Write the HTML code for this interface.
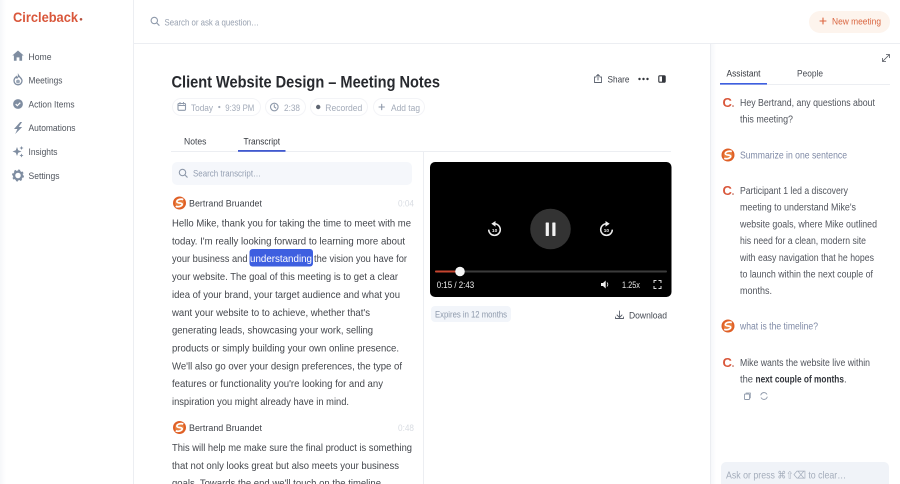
<!DOCTYPE html>
<html lang="en"><head><meta charset="utf-8"><title>Client Website Design – Meeting Notes</title>
<style>
html,body{margin:0;padding:0;width:900px;height:484px;overflow:hidden;background:#fff}
svg{display:block}
text{font-family:"Liberation Sans","DejaVu Sans",sans-serif;font-size:10px;fill:#444952}
.nav{font-size:9.3px;fill:#50555e}
.t{font-size:10.5px;fill:#43464c}
.c{font-size:9.8px;fill:#50545c}
.m{font-size:9.2px;fill:#a3abb9}
.ic{fill:none;stroke:#8f9aab;stroke-width:1.1;stroke-linecap:round;stroke-linejoin:round}
.chip{fill:#fff;stroke:#f3f4f7}
</style></head><body>
<svg width="900" height="484" viewBox="0 0 900 484" xmlns="http://www.w3.org/2000/svg">
<defs>
<linearGradient id="sh" x1="0" x2="1"><stop offset="0" stop-color="#f6f7fa"/><stop offset="1" stop-color="#fff"/></linearGradient>
<g id="av"><circle r="6.5" fill="#df5f26"/><circle r="4.6" fill="#e9803f"/><path d="M3.8-3.4C1.5-4.6-2.8-3.4-2.6-1.2-2.4.6 2.6-.6 2.7 1.2 2.8 3.2-1.6 4.4-3.8 3.2" fill="none" stroke="#fff" stroke-width="1.7"/></g>
</defs>
<rect width="6" height="484" fill="url(#sh)"/>
<rect x="711" y="44" width="5" height="440" fill="url(#sh)"/>
<rect x="133" y="0" width="1" height="484" fill="#eceef2"/>
<rect x="134" y="43" width="766" height="1" fill="#eceef2"/>
<rect x="710" y="44" width="1" height="440" fill="#eceef2"/>
<rect x="423" y="152" width="1" height="332" fill="#eceef2"/>

<!-- Sidebar -->
<text x="13" y="22" textLength="65" lengthAdjust="spacingAndGlyphs" style="font-size:13.8px;font-weight:700;fill:#d9573b">Circleback</text>
<circle cx="81" cy="19.3" r="1.3" fill="#b4503d"/>
<path d="M18 50.5l5.7 5h-1.6v5.2h-2.7v-3.3h-2.8v3.3h-2.7v-5.2h-1.6z" fill="#7f8da1"/>
<path d="M18.500 75.500c0 2-1.200 1.800-1.600 2.500-.4-.3-.6-.7-.6-1.200-1.300 1-2.300 2.300-2.300 4a4 4 0 0 0 8 0c0-2.500-2.300-3.300-3.500-5.300z" fill="#fff" stroke="#7f8da1" stroke-width="1.300"/><circle cx="18" cy="81.500" r="1.900" fill="#9aa6b6"/>
<circle cx="18" cy="104" r="4.900" fill="#7f8da1"/><path d="M15.700 104.100l1.600 1.600 3-3" fill="none" stroke="#fff" stroke-width="1.200"/>
<path d="M20.200 122l-6.200 7h3.400l-2.200 5 7-7h-3.500l3.400-5z" fill="#7f8da1"/>
<path d="M17 147l1.200 3.300 3.300 1.200-3.300 1.200-1.200 3.300-1.200-3.300-3.300-1.200 3.300-1.200zM21.500 146l.6 1.400 1.400.6-1.400.6-.6 1.400-.6-1.400-1.400-.6 1.400-.6zM21.500 153.500l.6 1.400 1.400.6-1.400.6-.6 1.400-.6-1.400-1.400-.6 1.400-.6z" fill="#7f8da1"/>
<circle cx="18" cy="175.500" r="3.900" fill="none" stroke="#7f8da1" stroke-width="2.300"/><circle cx="18" cy="175.500" r="5.200" fill="none" stroke="#7f8da1" stroke-width="1.600" stroke-dasharray="2 2.080"/>
<text class="nav" x="28.500" y="59.800" textLength="23" lengthAdjust="spacingAndGlyphs">Home</text>
<text class="nav" x="28.500" y="83.600" textLength="34" lengthAdjust="spacingAndGlyphs">Meetings</text>
<text class="nav" x="28.500" y="107.400" textLength="46" lengthAdjust="spacingAndGlyphs">Action Items</text>
<text class="nav" x="28.500" y="131.200" textLength="47" lengthAdjust="spacingAndGlyphs">Automations</text>
<text class="nav" x="28.500" y="155" textLength="29" lengthAdjust="spacingAndGlyphs">Insights</text>
<text class="nav" x="28.500" y="178.800" textLength="31" lengthAdjust="spacingAndGlyphs">Settings</text>

<!-- Top bar -->
<circle cx="154.300" cy="20.500" r="3.200" class="ic"/><path d="M156.800 23l2.300 2.300" class="ic"/>
<text x="164.500" y="25.300" textLength="94.500" lengthAdjust="spacingAndGlyphs" style="font-size:9.200px;fill:#98a1b0">Search or ask a question…</text>
<rect x="809" y="11" width="81" height="22" rx="11" fill="#fdf4ed"/>
<path d="M823 18v6M820 21h6" stroke="#dc6540" stroke-width="1.100" stroke-linecap="round"/>
<text x="832" y="24.500" textLength="49" lengthAdjust="spacingAndGlyphs" style="font-size:9.200px;fill:#d9653f">New meeting</text>

<!-- Header -->
<text x="171.500" y="87.500" textLength="268.500" lengthAdjust="spacingAndGlyphs" style="font-size:16.300px;font-weight:700;fill:#27292e">Client Website Design – Meeting Notes</text>
<path d="M596 77h-1.500v5.500h7V77H600M598 80v-5M596.500 76l1.500-1.500 1.500 1.500" class="ic" style="stroke:#5d6470;stroke-width:.9"/>
<text x="607.500" y="82.500" textLength="22" lengthAdjust="spacingAndGlyphs" style="font-size:9.300px;fill:#3f434b">Share</text>
<circle cx="639.500" cy="79" r="1.200" fill="#33363c"/><circle cx="643.500" cy="79" r="1.200" fill="#33363c"/><circle cx="647.500" cy="79" r="1.200" fill="#33363c"/>
<rect x="658.800" y="75.800" width="6.400" height="6.400" rx="1" fill="#fff" stroke="#33363c" stroke-width="1.100"/><rect x="662" y="76" width="3" height="6" fill="#33363c"/>

<!-- Chips -->
<rect class="chip" x="172.500" y="98.500" width="88" height="17" rx="8.500"/>
<rect class="chip" x="265.500" y="98.500" width="40" height="17" rx="8.500"/>
<rect class="chip" x="310.500" y="98.500" width="57" height="17" rx="8.500"/>
<rect class="chip" x="373.500" y="98.500" width="51" height="17" rx="8.500"/>
<rect x="178" y="103.500" width="7.500" height="6.800" rx="1" class="ic"/><path d="M178 105.500h7.500M180 102.500v1.500M183.500 102.500v1.500" class="ic"/>
<text class="m" x="191" y="110.800" textLength="22" lengthAdjust="spacingAndGlyphs">Today</text>
<circle cx="219.300" cy="107" r="1.100" fill="#a3abb9"/>
<text class="m" x="225.300" y="110.800" textLength="29" lengthAdjust="spacingAndGlyphs">9:39 PM</text>
<circle cx="274.300" cy="107" r="3.800" class="ic"/><path d="M274.300 104.800V107l1.500 1" class="ic"/>
<text class="m" x="284" y="110.800" textLength="16" lengthAdjust="spacingAndGlyphs">2:38</text>
<circle cx="318.200" cy="107" r="2.200" fill="#5f6672"/>
<text class="m" x="325.300" y="110.800" textLength="37" lengthAdjust="spacingAndGlyphs">Recorded</text>
<path d="M381.700 104.300v5.400M379 107h5.400" class="ic"/>
<text class="m" x="391" y="110.800" textLength="29" lengthAdjust="spacingAndGlyphs">Add tag</text>

<!-- Tabs -->
<rect x="171" y="151" width="500" height="1" fill="#eceef2"/>
<text x="184" y="144.500" textLength="22.500" lengthAdjust="spacingAndGlyphs" style="font-size:9.300px;fill:#3f434b">Notes</text>
<text x="243.500" y="144.500" textLength="36.500" lengthAdjust="spacingAndGlyphs" style="font-size:9.300px;fill:#33363c">Transcript</text>
<rect x="238" y="150" width="47.500" height="1.800" fill="#4059cf"/>

<!-- Transcript search -->
<rect x="172" y="162" width="240" height="23" rx="5" fill="#f5f7fb"/>
<circle cx="182.500" cy="172.500" r="3.200" class="ic"/><path d="M185 175l2.200 2.200" class="ic"/>
<text x="193" y="176.500" textLength="68" lengthAdjust="spacingAndGlyphs" style="font-size:9.200px;fill:#949fb2">Search transcript…</text>

<!-- Speaker 1 -->
<use href="#av" x="179.500" y="203"/>
<text x="189" y="206.500" textLength="73" lengthAdjust="spacingAndGlyphs" style="font-size:9.600px;fill:#3f434a">Bertrand Bruandet</text>
<text x="398" y="206.500" textLength="16" lengthAdjust="spacingAndGlyphs" style="font-size:9.500px;fill:#d8dce2">0:04</text>
<text class="t" x="172" y="226.500" textLength="239" lengthAdjust="spacingAndGlyphs">Hello Mike, thank you for taking the time to meet with me</text>
<text class="t" x="172" y="244.300" textLength="233" lengthAdjust="spacingAndGlyphs">today. I'm really looking forward to learning more about</text>
<text class="t" x="172" y="262.200" textLength="75.500" lengthAdjust="spacingAndGlyphs">your business and</text>
<rect x="249.500" y="249" width="63.500" height="17.500" rx="3" fill="#3e5fe0"/>
<text class="t" x="250" y="262.200" textLength="62" lengthAdjust="spacingAndGlyphs" style="fill:#fff">understanding</text>
<text class="t" x="314" y="262.200" textLength="93" lengthAdjust="spacingAndGlyphs">the vision you have for</text>
<text class="t" x="172" y="280" textLength="226" lengthAdjust="spacingAndGlyphs">your website. The goal of this meeting is to get a clear</text>
<text class="t" x="172" y="298" textLength="228" lengthAdjust="spacingAndGlyphs">idea of your brand, your target audience and what you</text>
<text class="t" x="172" y="315.800" textLength="198" lengthAdjust="spacingAndGlyphs">want your website to to achieve, whether that's</text>
<text class="t" x="172" y="333.700" textLength="201" lengthAdjust="spacingAndGlyphs">generating leads, showcasing your work, selling</text>
<text class="t" x="172" y="351.500" textLength="227" lengthAdjust="spacingAndGlyphs">products or simply building your own online presence.</text>
<text class="t" x="172" y="369.400" textLength="230" lengthAdjust="spacingAndGlyphs">We'll also go over your design preferences, the type of</text>
<text class="t" x="172" y="387.200" textLength="211" lengthAdjust="spacingAndGlyphs">features or functionality you're looking for and any</text>
<text class="t" x="172" y="405" textLength="177" lengthAdjust="spacingAndGlyphs">inspiration you might already have in mind.</text>

<!-- Speaker 2 -->
<use href="#av" x="179.500" y="427.500"/>
<text x="189" y="431" textLength="73" lengthAdjust="spacingAndGlyphs" style="font-size:9.600px;fill:#3f434a">Bertrand Bruandet</text>
<text x="398" y="431" textLength="16" lengthAdjust="spacingAndGlyphs" style="font-size:9.500px;fill:#d8dce2">0:48</text>
<text class="t" x="172" y="451" textLength="240" lengthAdjust="spacingAndGlyphs">This will help me make sure the final product is something</text>
<text class="t" x="172" y="468.800" textLength="227" lengthAdjust="spacingAndGlyphs">that not only looks great but also meets your business</text>
<text class="t" x="172" y="486.500" textLength="209" lengthAdjust="spacingAndGlyphs">goals. Towards the end we'll touch on the timeline</text>

<!-- Video -->
<rect x="430" y="162" width="241.500" height="135" rx="5" fill="#000"/>
<circle cx="550.500" cy="229" r="20.300" fill="#333"/>
<rect x="545.700" y="222.500" width="3.200" height="13.500" rx=".6" fill="#f2f2f2"/><rect x="552.300" y="222.500" width="3.200" height="13.500" rx=".6" fill="#f2f2f2"/>
<path d="M494.500 223.800a5.800 5.800 0 1 1-5.800 5.800" fill="none" stroke="#eee" stroke-width="1.500"/><path d="M495.500 221v5.600l-4.200-2.800z" fill="#eee"/>
<text x="494.600" y="232" text-anchor="middle" style="font-size:4.800px;font-weight:700;fill:#eee">10</text>
<path d="M606.500 223.800a5.800 5.800 0 1 0 5.800 5.800" fill="none" stroke="#eee" stroke-width="1.500"/><path d="M605.500 221v5.600l4.200-2.800z" fill="#eee"/>
<text x="606.400" y="232" text-anchor="middle" style="font-size:4.800px;font-weight:700;fill:#eee">10</text>
<rect x="435" y="270.500" width="232" height="2" rx="1" fill="#3b3b3b"/>
<rect x="435" y="270.500" width="25" height="2" rx="1" fill="#c6452f"/>
<circle cx="460" cy="271.500" r="4.800" fill="#f5f5f5"/>
<text x="436.700" y="288" textLength="37.500" lengthAdjust="spacingAndGlyphs" style="font-size:9px;fill:#eee">0:15 / 2:43</text>
<path d="M601 283h2l2.700-2.500v8l-2.700-2.500h-2z" fill="#eee"/><path d="M607 282.500a3 3 0 0 1 0 4" fill="none" stroke="#eee" stroke-width=".9"/>
<text x="622" y="288" textLength="18" lengthAdjust="spacingAndGlyphs" style="font-size:9px;fill:#e6e6e6">1.25x</text>
<path d="M654 283v-2.500h2.500M658.500 280.500h2.500v2.500M661 286v2.500h-2.500M656.500 288.500H654V286" fill="none" stroke="#ddd" stroke-width="1"/>

<rect x="431" y="306" width="80" height="16" rx="4" fill="#f2f5fa"/>
<text x="435" y="317.500" textLength="72" lengthAdjust="spacingAndGlyphs" style="font-size:9px;fill:#8d99ab">Expires in 12 months</text>
<path d="M619.500 311v6M617 315l2.500 2.500 2.500-2.500M615.500 317v1.500h8V317" class="ic" style="stroke:#5b616c;stroke-width:.9"/>
<text x="629" y="318.500" textLength="38" lengthAdjust="spacingAndGlyphs" style="font-size:9.300px;fill:#444952">Download</text>

<!-- Right panel -->
<path d="M882.500 61.500l7-7M886 54.500h3.500V58M882.500 58v3.500H886" fill="none" stroke="#555962" stroke-width=".8"/>
<rect x="720" y="84" width="170" height="1" fill="#eceef2"/>
<text x="726.500" y="76.500" textLength="34" lengthAdjust="spacingAndGlyphs" style="font-size:9.300px;fill:#33363c">Assistant</text>
<text x="797" y="76.500" textLength="26" lengthAdjust="spacingAndGlyphs" style="font-size:9.300px;fill:#484c54">People</text>
<rect x="720" y="83" width="47" height="1.600" fill="#3e5fe0"/>

<text x="722.500" y="107" style="font-size:13px;font-weight:700;fill:#d9573b">C</text><circle cx="733" cy="106" r=".8" fill="#b4503d"/>
<text x="722.500" y="195" style="font-size:13px;font-weight:700;fill:#d9573b">C</text><circle cx="733" cy="194" r=".8" fill="#b4503d"/>
<text x="722.500" y="367" style="font-size:13px;font-weight:700;fill:#d9573b">C</text><circle cx="733" cy="366" r=".8" fill="#b4503d"/>
<text class="c" x="740" y="105.800" textLength="135" lengthAdjust="spacingAndGlyphs">Hey Bertrand, any questions about</text>
<text class="c" x="740" y="122.500" textLength="53" lengthAdjust="spacingAndGlyphs">this meeting?</text>
<use href="#av" x="728" y="155"/>
<text class="c" x="740" y="158.500" textLength="107" lengthAdjust="spacingAndGlyphs" style="fill:#7f8aa6">Summarize in one sentence</text>
<text class="c" x="740" y="194" textLength="108" lengthAdjust="spacingAndGlyphs">Participant 1 led a discovery</text>
<text class="c" x="740" y="210.700" textLength="116" lengthAdjust="spacingAndGlyphs">meeting to understand Mike's</text>
<text class="c" x="740" y="227.400" textLength="137" lengthAdjust="spacingAndGlyphs">website goals, where Mike outlined</text>
<text class="c" x="740" y="244" textLength="126" lengthAdjust="spacingAndGlyphs">his need for a clean, modern site</text>
<text class="c" x="740" y="260.800" textLength="134" lengthAdjust="spacingAndGlyphs">with easy navigation that he hopes</text>
<text class="c" x="740" y="277.500" textLength="133" lengthAdjust="spacingAndGlyphs">to launch within the next couple of</text>
<text class="c" x="740" y="294" textLength="32" lengthAdjust="spacingAndGlyphs">months.</text>
<use href="#av" x="728" y="326"/>
<text class="c" x="740" y="329.500" textLength="78" lengthAdjust="spacingAndGlyphs" style="fill:#7f8aa6">what is the timeline?</text>
<text class="c" x="740" y="365.800" textLength="130" lengthAdjust="spacingAndGlyphs">Mike wants the website live within</text>
<text class="c" x="740" y="382.500" textLength="13" lengthAdjust="spacingAndGlyphs">the</text>
<text class="c" x="755.500" y="382.500" textLength="88.500" lengthAdjust="spacingAndGlyphs" style="font-weight:700;fill:#33363c">next couple of months</text>
<text class="c" x="844" y="382.500">.</text>
<rect x="744.500" y="394" width="5" height="5.500" rx=".8" class="ic" style="stroke-width:.9"/><path d="M746 393h4.500v5" class="ic" style="stroke-width:.7"/>
<path d="M760.800 395a3.300 3.300 0 0 1 6-.8M767.200 397a3.300 3.300 0 0 1-6 .8" class="ic" style="stroke-width:.9"/>

<rect x="721" y="462" width="168" height="30" rx="5" fill="#f0f3f8"/>
<text x="726" y="478.500" textLength="120" lengthAdjust="spacingAndGlyphs" style="font-size:10.200px;fill:#a4adbb">Ask or press ⌘⇧⌫ to clear…</text>
</svg>
</body></html>
